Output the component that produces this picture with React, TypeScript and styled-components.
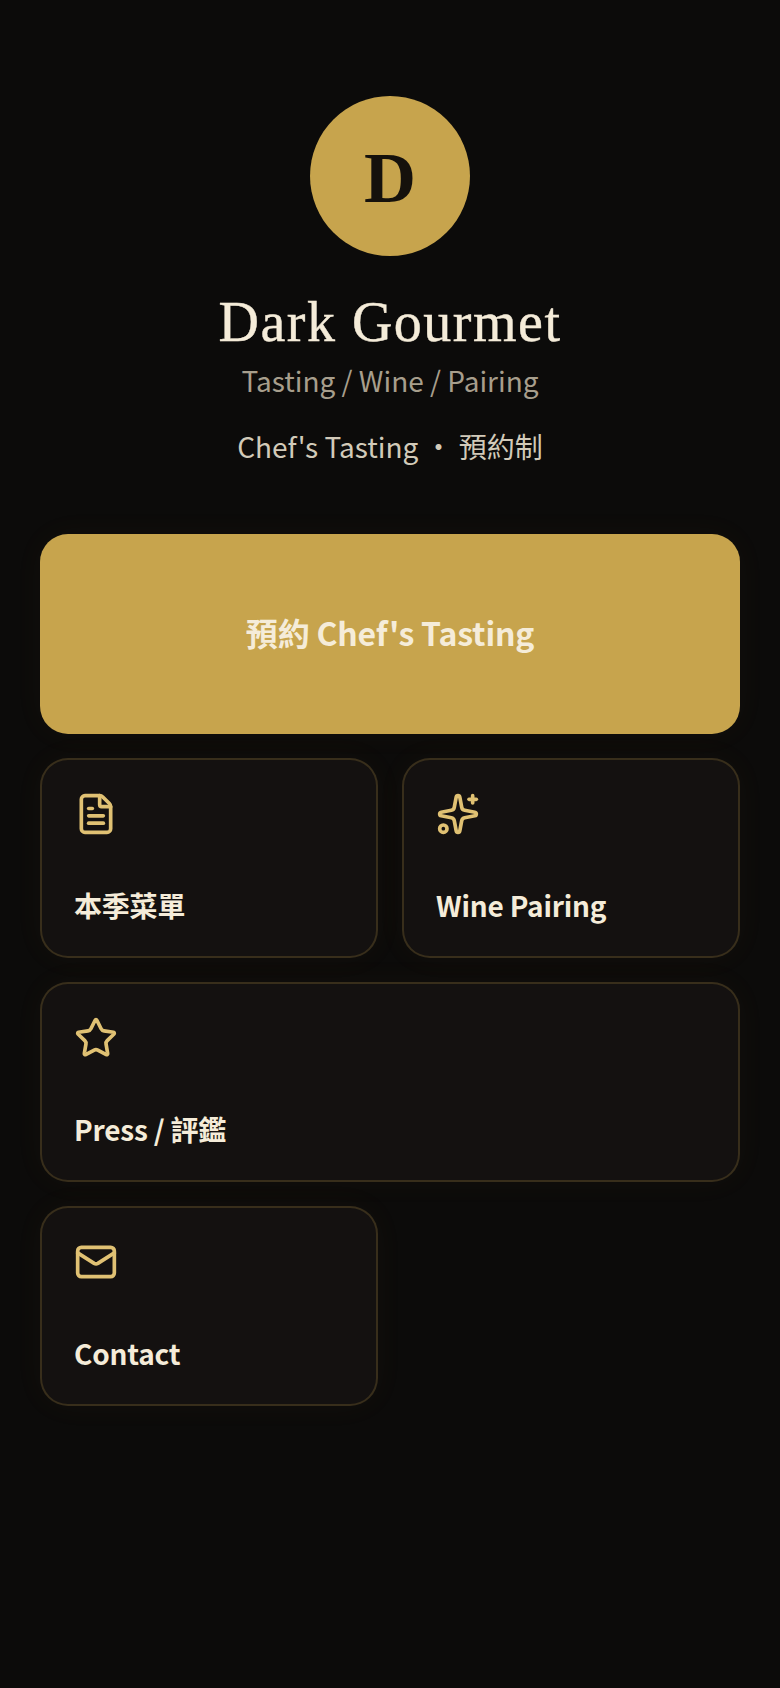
import React from 'react';
import styled, { createGlobalStyle } from 'styled-components';
import { FileText, Sparkles, Star, Mail, LucideIcon } from 'lucide-react';

const GlobalStyle = createGlobalStyle`
  html, body {
    margin: 0;
    padding: 0;
    background: #0c0b0a;
  }
  * {
    box-sizing: border-box;
  }
`;

const Page = styled.main`
  min-height: 1688px;
  padding: 96px 40px 40px;
  background: #0c0b0a;
  color: #f5ecd9;
  font-family: "Noto Sans CJK TC", "Noto Sans", sans-serif;
`;

const Header = styled.header`
  display: flex;
  flex-direction: column;
  align-items: center;
  margin-bottom: 67px;
`;

const Avatar = styled.div`
  width: 160px;
  height: 160px;
  padding-top: 4px;
  border-radius: 50%;
  background: #c7a44d;
  color: #15110c;
  display: flex;
  align-items: center;
  justify-content: center;
  font-family: "Liberation Serif", serif;
  font-size: 72px;
  font-weight: 700;
  margin-bottom: 32px;
`;

const Title = styled.h1`
  margin: 0;
  font-family: "Liberation Serif", serif;
  font-size: 56px;
  font-weight: 400;
  line-height: 68px;
  letter-spacing: 1.5px;
  -webkit-text-stroke: 0.4px #f5ecd9;
  color: #f5ecd9;
`;

const Subtitle = styled.p`
  margin: 3px 0 0;
  font-size: 28px;
  line-height: 42px;
  color: #a79e8c;
`;

const Note = styled.p`
  margin: 24px 0 0;
  font-size: 28px;
  line-height: 42px;
  color: #d2cab9;
`;

const LinkGrid = styled.nav`
  display: grid;
  grid-template-columns: 1fr 1fr;
  grid-auto-rows: 200px;
  gap: 24px;
`;

const PrimaryButton = styled.a`
  grid-column: span 2;
  display: flex;
  align-items: center;
  justify-content: center;
  padding-bottom: 4px;
  border-radius: 28px;
  background: #c7a44d;
  color: #f5ecd9;
  font-size: 32px;
  font-weight: 600;
  letter-spacing: -0.2px;
  box-shadow: 0 0 32px rgba(199, 164, 77, 0.04);
`;

const Card = styled.a<{ $wide?: boolean }>`
  grid-column: ${({ $wide }) => ($wide ? 'span 2' : 'span 1')};
  display: flex;
  flex-direction: column;
  justify-content: space-between;
  padding: 32px 32px 30px;
  border: 2px solid rgba(199, 164, 77, 0.2);
  border-radius: 28px;
  background: #141110;
  box-shadow: 0 0 32px rgba(199, 164, 77, 0.04);
`;

const CardLabel = styled.span`
  font-size: 28px;
  font-weight: 600;
  line-height: 42px;
  letter-spacing: -0.2px;
  color: #f5ecd9;
`;

const IconSlot = styled.span`
  display: block;
  width: 44px;
  height: 44px;
  color: #e0c173;
`;

type LinkItem = { label: string; icon: LucideIcon; wide?: boolean };

const links: LinkItem[] = [
  { label: '本季菜單', icon: FileText },
  { label: 'Wine Pairing', icon: Sparkles },
  { label: 'Press / 評鑑', icon: Star, wide: true },
  { label: 'Contact', icon: Mail },
];

const App: React.FC = () => (
  <Page>
    <GlobalStyle />
    <Header>
      <Avatar>D</Avatar>
      <Title>Dark Gourmet</Title>
      <Subtitle>Tasting / Wine / Pairing</Subtitle>
      <Note>Chef's Tasting ・ 預約制</Note>
    </Header>
    <LinkGrid>
      <PrimaryButton>預約 Chef's Tasting</PrimaryButton>
      {links.map(({ label, icon: Icon, wide }) => (
        <Card key={label} $wide={wide}>
          <IconSlot>
            <Icon size={44} strokeWidth={2} />
          </IconSlot>
          <CardLabel>{label}</CardLabel>
        </Card>
      ))}
    </LinkGrid>
  </Page>
);

export default App;
